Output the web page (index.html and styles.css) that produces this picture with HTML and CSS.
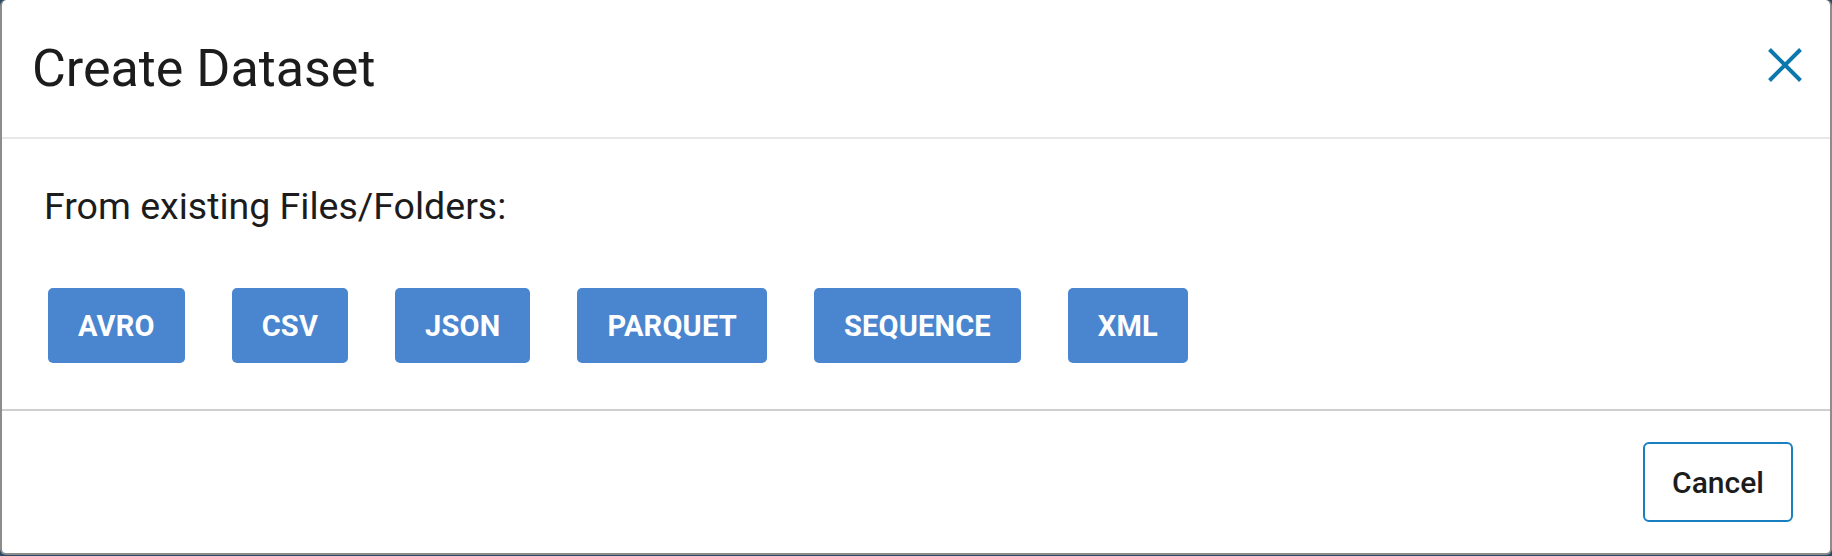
FILE: index.html
```html
<!DOCTYPE html>
<html>
<head>
<meta charset="utf-8">
<title>Create Dataset</title>
<link rel="stylesheet" href="styles.css">
</head>
<body>
<div class="modal">
  <div class="modal-header">
    <h1 class="modal-title">Create Dataset</h1>
    <button class="close-btn" aria-label="Close">
      <svg width="34" height="34" viewBox="0 0 34 34"><path d="M1.5 1.5 L32.5 32.5 M32.5 1.5 L1.5 32.5" stroke="#0b78ad" stroke-width="4" stroke-linecap="butt" fill="none"/></svg>
    </button>
  </div>
  <div class="modal-body">
    <p class="label">From existing Files/Folders:</p>
    <div class="types">
      <button class="type-btn">AVRO</button>
      <button class="type-btn">CSV</button>
      <button class="type-btn">JSON</button>
      <button class="type-btn">PARQUET</button>
      <button class="type-btn">SEQUENCE</button>
      <button class="type-btn">XML</button>
    </div>
  </div>
  <div class="modal-footer">
    <button class="cancel-btn">Cancel</button>
  </div>
</div>
</body>
</html>
```

FILE: styles.css
```css
html, body {
  margin: 0;
  padding: 0;
  height: 100%;
}
body {
  background: #2b4a63;
  font-family: Roboto, "Liberation Sans", sans-serif;
  overflow: hidden;
}
.modal {
  box-sizing: border-box;
  width: 1832px;
  height: 555px;
  background: #ffffff;
  border: 2px solid #8c8c8c;
  border-top: none;
  border-radius: 6px;
  display: flex;
  flex-direction: column;
}
.modal-header {
  box-sizing: border-box;
  height: 139px;
  border-bottom: 2px solid #e8e8e8;
  display: flex;
  align-items: center;
  justify-content: space-between;
  padding: 0 28px 0 30px;
  flex: none;
}
.modal-title {
  margin: 0;
  font-size: 52px;
  font-weight: 400;
  color: #1c1c1c;
  line-height: 60px;
}
.close-btn {
  background: none;
  border: none;
  padding: 0;
  width: 34px;
  height: 34px;
  display: flex;
  margin-bottom: 8px;
}
.modal-body {
  box-sizing: border-box;
  height: 272px;
  padding: 47px 40px 0 40px;
  border-bottom: 2px solid #cfcfcf;
  flex: none;
}
.label {
  margin: 0 0 0 2px;
  font-size: 37.5px;
  line-height: 40px;
  color: #1c1c1c;
}
.types {
  display: flex;
  gap: 47px;
  margin: 62px 0 0 6px;
}
.type-btn {
  height: 75px;
  padding: 0 30px;
  background: #4a86d0;
  border: none;
  border-radius: 5px;
  color: #ffffff;
  font-family: Roboto, "Liberation Sans", sans-serif;
  font-size: 29px;
  font-weight: 700;
  letter-spacing: 0.2px;
}
.modal-footer {
  flex: 1;
  display: flex;
  align-items: center;
  justify-content: flex-end;
  padding: 0 37px;
}
.cancel-btn {
  width: 150px;
  height: 80px;
  background: #ffffff;
  border: 2px solid #1a7fc1;
  border-radius: 6px;
  color: #1c1c1c;
  font-family: Roboto, "Liberation Sans", sans-serif;
  font-size: 30px;
  font-weight: 500;
}
```
